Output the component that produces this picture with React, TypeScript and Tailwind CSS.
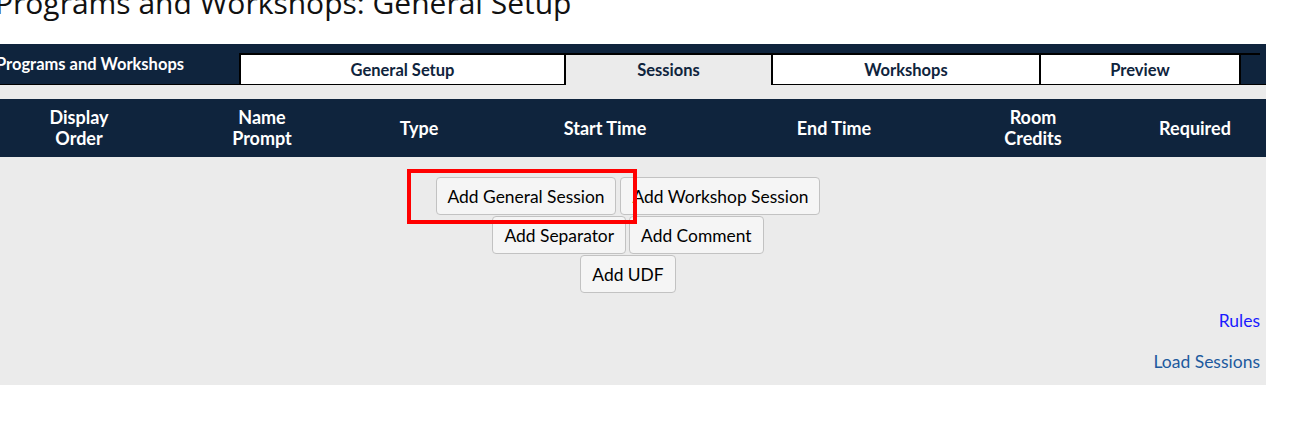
import React from "react";

const lato = { fontFamily: "Lato, 'Liberation Sans', sans-serif" } as const;

function Btn({ children }: { children: React.ReactNode }) {
  return (
    <button className="h-[38px] px-[11px] pt-[1px] rounded-[4px] border border-[#c2c2c2] bg-[#f5f5f5] text-[17.4px] text-black leading-none">
      {children}
    </button>
  );
}

export default function App() {
  const cols = [
    ["Display", "Order"],
    ["Name", "Prompt"],
    ["Type"],
    ["Start Time"],
    ["End Time"],
    ["Room", "Credits"],
    ["Required"],
  ];
  return (
    <div className="relative w-[1294px] h-[437px] overflow-hidden bg-white" style={lato}>
      <div className="h-[44px] overflow-hidden">
        <h1
          className="-mt-[16px] -ml-[5px] text-[30px] leading-[38px] font-normal text-[#111] whitespace-nowrap"
          style={{ fontFamily: "'Open Sans', 'Noto Sans', sans-serif" }}
        >
          Programs and Workshops: General Setup
        </h1>
      </div>
      <div className="w-[1266px]">
        <div className="h-[41px] bg-[#0f243d] flex items-end border-b border-black">
          <div className="w-[239px] h-full flex items-center -ml-[4px]">
            <span className="text-white font-bold text-[16.5px] mt-[1px]">Programs and Workshops</span>
          </div>
          <div className="ml-[4px] w-[327px] h-[31px] pt-[2px] bg-white border-2 border-b-0 border-black flex items-center justify-center text-[16.5px] font-bold text-[#0f243d]">
            General Setup
          </div>
          <div className="w-[205px] h-[32px] -mb-[1px] pt-[1px] bg-[#ebebeb] border-t-2 border-black flex items-center justify-center text-[16.5px] font-bold text-[#0f243d]">
            Sessions
          </div>
          <div className="w-[270px] h-[31px] pt-[2px] bg-white border-2 border-b-0 border-black flex items-center justify-center text-[16.5px] font-bold text-[#0f243d]">
            Workshops
          </div>
          <div className="w-[200px] h-[31px] pt-[2px] bg-white border-2 border-b-0 border-l-0 border-black flex items-center justify-center text-[16.5px] font-bold text-[#0f243d]">
            Preview
          </div>
          <div className="w-[19px] h-[31px] border-t-2 border-black" />
        </div>
        <div className="h-[14px] bg-[#ebebeb]" />
        <div className="h-[58px] bg-[#0f243d] grid grid-cols-[158px_208px_106px_266px_192px_206px_118px] items-center">
          {cols.map((c, i) => (
            <div key={i} className="text-center text-white font-bold text-[18px] leading-[21px]">
              {c.map((l, j) => (
                <div key={j}>{l}</div>
              ))}
            </div>
          ))}
        </div>
        <div className="bg-[#ebebeb] h-[228px] flex flex-col">
          <div className="pt-[20px] pr-[10px] flex flex-col items-center gap-[1px]">
            <div className="flex gap-[4px]">
              <Btn>Add General Session</Btn>
              <Btn>Add Workshop Session</Btn>
            </div>
            <div className="flex gap-[3px]">
              <Btn>Add Separator</Btn>
              <Btn>Add Comment</Btn>
            </div>
            <div className="flex">
              <Btn>Add UDF</Btn>
            </div>
          </div>
          <div className="mt-[18px] pr-[6px] flex flex-col items-end gap-[21px] text-[17.5px] leading-[20px]">
            <a className="text-[#1a1aff]" href="#">Rules</a>
            <a className="text-[#1d5a9e]" href="#">Load Sessions</a>
          </div>
        </div>
      </div>
      <div className="absolute left-[407px] top-[169px] w-[230px] h-[55px] border-[4px] border-[#ff0000] pointer-events-none" />
    </div>
  );
}
